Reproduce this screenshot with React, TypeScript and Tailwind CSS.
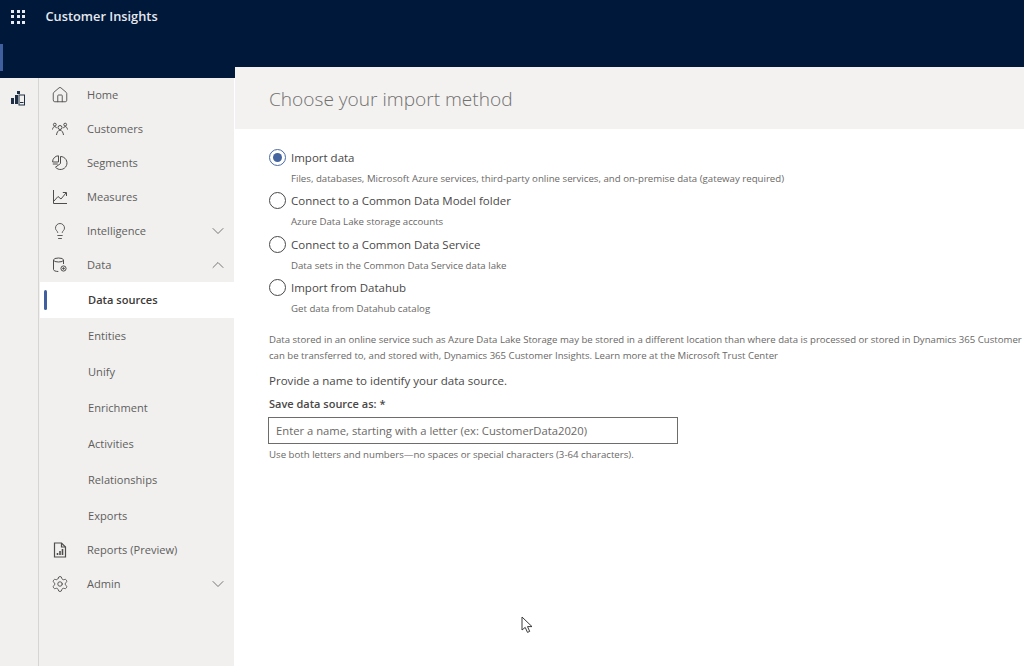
import { ChevronDown, ChevronUp, Home, Lightbulb, Settings } from "lucide-react";
import type { ReactNode } from "react";

const font = { fontFamily: '"Open Sans", "Noto Sans", sans-serif' };

function CustomersIcon() {
  return (
    <svg width="16" height="16" viewBox="0 0 16 16" fill="none" stroke="currentColor" strokeWidth="1">
      <circle cx="8" cy="6.5" r="2" />
      <path d="M4.5 14c.3-2.6 1.5-4.6 3.5-4.9 2 .3 3.2 2.3 3.5 4.9" />
      <circle cx="2.8" cy="3.6" r="1.4" />
      <path d="M.5 8.5c.2-1.6 1-2.8 2.3-3l2 1.4" />
      <circle cx="13.2" cy="3.6" r="1.4" />
      <path d="M15.5 8.5c-.2-1.6-1-2.8-2.3-3l-2 1.4" />
    </svg>
  );
}

function SegmentsIcon() {
  return (
    <svg width="16" height="16" viewBox="0 0 16 16" fill="none" stroke="currentColor" strokeWidth="1">
      <path d="M8.5 1.5a6.5 6.5 0 1 1-5 10.7L8.5 8.5z" />
      <path d="M6.5.8v6.2H.6a6 6 0 0 1 5.9-6.2z" />
      <path d="M.8 9h5" />
    </svg>
  );
}

function MeasuresIcon() {
  return (
    <svg width="16" height="16" viewBox="0 0 16 16" fill="none" stroke="currentColor" strokeWidth="1">
      <path d="M1.5 1v13.5H15" />
      <path d="M2 12l4-4.5 3 2.5 5-6" />
      <path d="M10.8 3.5H14.5V7" />
    </svg>
  );
}

function DataIcon() {
  return (
    <svg width="16" height="16" viewBox="0 0 16 16" fill="none" stroke="currentColor" strokeWidth="1">
      <ellipse cx="6.5" cy="3" rx="5" ry="2" />
      <path d="M1.5 3v9.5c0 1.1 2 2 4.8 2" />
      <path d="M11.5 3v4" />
      <circle cx="11.5" cy="11.5" r="2.6" />
      <circle cx="11.5" cy="11.5" r=".8" fill="currentColor" />
    </svg>
  );
}

function ReportsIcon() {
  return (
    <svg width="16" height="16" viewBox="0 0 16 16" fill="none" stroke="currentColor" strokeWidth="1.2">
      <path d="M2.5 1h7l4 4v10h-11z" />
      <path d="M9.5 1v4h4" />
      <path d="M5.5 13v-2M8 13V9M10.5 13V7" strokeWidth="1.6" />
    </svg>
  );
}

function RailIcon() {
  return (
    <svg width="16" height="16" viewBox="0 0 16 16" fill="#1f2f45">
      <rect x="1" y="8" width="3" height="6" />
      <rect x="5" y="5" width="3" height="9" />
      <rect x="7" y="1" width="3" height="3" />
      <rect x="9" y="5" width="5.5" height="10" fill="#f1f0ef" stroke="#1f2f45" />
      <rect x="10" y="12" width="3.5" height="1" />
    </svg>
  );
}

function WaffleIcon() {
  const dots = Array.from({ length: 9 });
  return (
    <div className="grid grid-cols-3 gap-[2.5px]">
      {dots.map((_, i) => (
        <div key={i} className="h-[3px] w-[3px] bg-[#e8ebf0]" />
      ))}
    </div>
  );
}

function NavItem({ icon, label, chevron }: { icon: ReactNode; label: string; chevron?: "up" | "down" }) {
  return (
    <div className="flex h-[34px] items-center text-[#605e5c]">
      <div className="flex w-[48px] justify-center pr-[7px] text-[#4f4d4b]">{icon}</div>
      <span className="pt-[1px] text-[11.1px]">{label}</span>
      {chevron === "down" && <ChevronDown size={20} strokeWidth={1} className="ml-auto mr-[6px]" />}
      {chevron === "up" && <ChevronUp size={20} strokeWidth={1} className="ml-auto mr-[6px]" />}
    </div>
  );
}

function SubItem({ label, active, short }: { label: string; active?: boolean; short?: boolean }) {
  if (active) {
    return (
      <div className="ml-[1px] flex h-[36px] items-center bg-white pl-[4px] text-[#3b3a39]">
        <div className="h-[20px] w-[3px] rounded-sm bg-[#3f5f9e]" />
        <span className="ml-[41px] pt-[1px] text-[11.1px] font-semibold">{label}</span>
      </div>
    );
  }
  return (
    <div className={`flex items-center pl-[49px] text-[#605e5c] ${short ? "h-[35px]" : "h-[36px]"}`}>
      <span className="pt-[1px] text-[11.1px]">{label}</span>
    </div>
  );
}

function RadioOption({ label, hint, checked }: { label: string; hint: string; checked?: boolean }) {
  return (
    <div className="h-[43.5px]">
      <div className="flex h-[18px] items-center">
        <div
          className={`flex h-[17px] w-[17px] shrink-0 items-center justify-center rounded-full border ${
            checked ? "border-[#4a6aa5]" : "border-[#4a4847]"
          }`}
        >
          {checked && <div className="h-[9px] w-[9px] rounded-full bg-[#44649f]" />}
        </div>
        <span className="ml-[5px] pt-[1px] text-[11.5px] text-[#4a4847]">{label}</span>
      </div>
      <p className="mt-[5.5px] pl-[22px] text-[9.66px] leading-[14px] text-[#6a6866]">{hint}</p>
    </div>
  );
}

export default function App() {
  return (
    <div className="flex h-[666px] w-[1024px] flex-col overflow-hidden bg-white" style={font}>
      <header className="h-[78px] shrink-0 bg-[#00183a]">
        <div className="flex h-[33px] items-center pl-[11px]">
          <WaffleIcon />
          <span className="ml-[20.5px] text-[12.8px] font-semibold text-[#e6e9ee]">Customer Insights</span>
        </div>
        <div className="mt-[11px] h-[27px] w-[3px] bg-[#3f5f9e]" />
      </header>

      <div className="flex min-h-0 flex-1">
        <aside className="flex w-[39px] shrink-0 justify-center border-r border-[#d6d5d3] bg-[#f1f0ef] pr-[2px] pt-[12px]">
          <RailIcon />
        </aside>
        <nav className="w-[195px] shrink-0 bg-[#f1f0ef]">
          <NavItem icon={<Home size={18} strokeWidth={1.2} />} label="Home" />
          <NavItem icon={<CustomersIcon />} label="Customers" />
          <NavItem icon={<SegmentsIcon />} label="Segments" />
          <NavItem icon={<MeasuresIcon />} label="Measures" />
          <NavItem icon={<Lightbulb size={18} strokeWidth={1.2} />} label="Intelligence" chevron="down" />
          <NavItem icon={<DataIcon />} label="Data" chevron="up" />
          <SubItem label="Data sources" active />
          <SubItem label="Entities" />
          <SubItem label="Unify" />
          <SubItem label="Enrichment" />
          <SubItem label="Activities" />
          <SubItem label="Relationships" />
          <SubItem label="Exports" short />
          <NavItem icon={<ReportsIcon />} label="Reports (Preview)" />
          <NavItem icon={<Settings size={18} strokeWidth={1.2} />} label="Admin" chevron="down" />
        </nav>

        <main className="relative -mt-[11px] ml-[1px] min-w-0 flex-1 overflow-hidden whitespace-nowrap bg-white">
          <div className="flex h-[62px] items-center bg-[#f3f2f1] pl-[34px] pt-[3px]">
            <h1 className="text-[19.1px] font-light text-[#71706e]">Choose your import method</h1>
          </div>

          <div className="pl-[34px] pt-[19px]">
            <RadioOption
              checked
              label="Import data"
              hint="Files, databases, Microsoft Azure services, third-party online services, and on-premise data (gateway required)"
            />
            <RadioOption label="Connect to a Common Data Model folder" hint="Azure Data Lake storage accounts" />
            <RadioOption label="Connect to a Common Data Service" hint="Data sets in the Common Data Service data lake" />
            <RadioOption label="Import from Datahub" hint="Get data from Datahub catalog" />

            <p className="mt-[10px] text-[9.6px] leading-[16px] text-[#6a6866]">
              Data stored in an online service such as Azure Data Lake Storage may be stored in a different location than where data is processed or stored in Dynamics 365 Customer Insights
              <br />
              can be transferred to, and stored with, Dynamics 365 Customer Insights. Learn more at the Microsoft Trust Center
            </p>
            <p className="mt-[9px] text-[11.56px] leading-[16px] text-[#4a4847]">Provide a name to identify your data source.</p>
            <p className="mt-[8px] text-[11px] font-semibold leading-[14px] text-[#4a4847]">Save data source as: *</p>
            <div className="-ml-px mt-[6px] flex h-[27px] w-[410px] items-center border border-[#6f6d6b] pl-[7px] pt-[2px] text-[11.25px] text-[#6a6866]">
              Enter a name, starting with a letter (ex: CustomerData2020)
            </div>
            <p className="mt-[4px] text-[9.66px] leading-[14px] text-[#6a6866]">
              Use both letters and numbers—no spaces or special characters (3-64 characters).
            </p>
          </div>

          {/* mouse pointer */}
          <svg className="absolute left-[286px] top-[549px]" width="13" height="19" viewBox="0 0 13 19" fill="white" stroke="#3a3a3a" strokeWidth="1">
            <path d="M1 1v13l3.2-2.6 2.3 5 2.2-1-2.2-4.8H11z" />
          </svg>
        </main>
      </div>
    </div>
  );
}
